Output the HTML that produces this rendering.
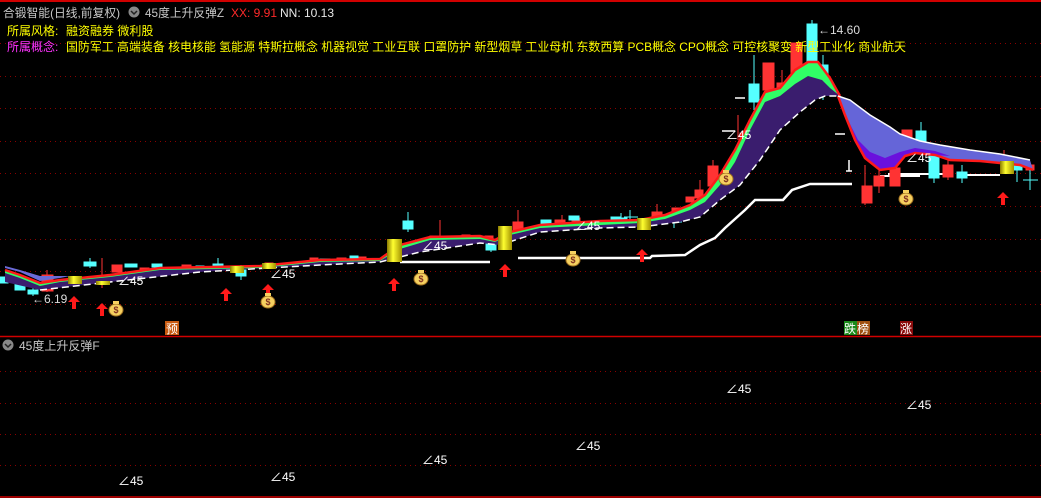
<!DOCTYPE html>
<html><head><meta charset="utf-8"><style>
html,body{margin:0;padding:0;background:#000;width:1041px;height:498px;overflow:hidden}
svg{display:block}
text{font-family:"Liberation Sans","Noto Sans CJK SC",sans-serif}
</style></head><body>
<svg width="1041" height="498" viewBox="0 0 1041 498" xmlns="http://www.w3.org/2000/svg">
<rect width="1041" height="498" fill="#000"/>
<line x1="0" y1="1" x2="1041" y2="1" stroke="#d00000" stroke-width="2"/>
<g stroke="#8a0000" stroke-dasharray="1,4" stroke-width="1">
<line x1="0" y1="43.5" x2="1041" y2="43.5"/><line x1="0" y1="76.5" x2="1041" y2="76.5"/>
<line x1="0" y1="108.5" x2="1041" y2="108.5"/><line x1="0" y1="141.5" x2="1041" y2="141.5"/>
<line x1="0" y1="173.5" x2="1041" y2="173.5"/><line x1="0" y1="206.5" x2="1041" y2="206.5"/>
<line x1="0" y1="239.5" x2="1041" y2="239.5"/><line x1="0" y1="271.5" x2="1041" y2="271.5"/>
<line x1="0" y1="304.5" x2="1041" y2="304.5"/>
<line x1="0" y1="371.5" x2="1041" y2="371.5"/><line x1="0" y1="403.5" x2="1041" y2="403.5"/>
<line x1="0" y1="434.5" x2="1041" y2="434.5"/><line x1="0" y1="465.5" x2="1041" y2="465.5"/>
</g>
<line x1="0" y1="336.5" x2="1041" y2="336.5" stroke="#d00000" stroke-width="1.5"/>
<line x1="0" y1="497" x2="1041" y2="497" stroke="#d00000" stroke-width="1.5"/>

<polyline fill="none" stroke="#fff" stroke-width="2.5" points="400,262 490,262"/>
<polyline fill="none" stroke="#fff" stroke-width="2.5" points="518,258 650,258 652,256 685,255 700,245 715,238 725,228 745,210 755,200 783,200 792,190 810,184 852,184"/>
<polyline fill="none" stroke="#fff" stroke-width="2" points="880,176 920,176"/>
<polyline fill="none" stroke="#fff" stroke-width="2" points="888,174 950,174"/>
<polyline fill="none" stroke="#fff" stroke-width="2" points="960,175 1000,175"/>

<g fill="#ff3333" stroke="#ff3333">
<rect x="42" y="275" width="11" height="16"/><line x1="47" y1="270" x2="47" y2="292"/>
<rect x="112" y="265" width="10" height="7"/><line x1="102" y1="258" x2="102" y2="288"/>
<rect x="140" y="268" width="9" height="3"/><rect x="182" y="265" width="9" height="3"/>
<rect x="265" y="263" width="8" height="4"/><rect x="310" y="258" width="8" height="5"/>
<rect x="337" y="258" width="9" height="3"/><rect x="358" y="257" width="8" height="2"/>
<rect x="430" y="236" width="14" height="6"/><line x1="440" y1="220" x2="440" y2="236"/>
<rect x="462" y="235" width="8" height="3"/><rect x="485" y="236" width="8" height="3"/>
<rect x="513" y="222" width="10" height="8"/><line x1="518" y1="210" x2="518" y2="232"/>
<rect x="555" y="220" width="10" height="4"/><line x1="562" y1="215" x2="562" y2="230"/>
<rect x="572" y="218" width="8" height="3"/>
<rect x="652" y="212" width="10" height="6"/><line x1="657" y1="204" x2="657" y2="220"/>
<rect x="672" y="208" width="8" height="4"/>
<rect x="686" y="197" width="8" height="5"/>
<rect x="695" y="190" width="8" height="8"/><line x1="700" y1="180" x2="700" y2="200"/>
<rect x="708" y="166" width="10" height="20"/><line x1="713" y1="160" x2="713" y2="186"/>
<rect x="740" y="133" width="8" height="12"/><line x1="738" y1="115" x2="738" y2="140"/>
<rect x="763" y="63" width="11" height="27"/>
<rect x="777" y="83" width="8" height="10"/><line x1="782" y1="70" x2="782" y2="100"/>
<rect x="791" y="43" width="11" height="30"/>
<rect x="862" y="186" width="10" height="17"/><line x1="865" y1="165" x2="865" y2="205"/>
<rect x="874" y="176" width="10" height="10"/><line x1="879" y1="170" x2="879" y2="193"/>
<rect x="890" y="168" width="10" height="18"/>
<rect x="902" y="130" width="10" height="14"/>
<rect x="943" y="165" width="10" height="12"/><line x1="948" y1="150" x2="948" y2="180"/>
<rect x="918" y="146" width="10" height="4"/>
<line x1="1004" y1="150" x2="1004" y2="170"/>
<rect x="1026" y="165" width="8" height="5"/>
</g>
<g fill="#55ffff" stroke="#55ffff">
<rect x="0" y="277" width="8" height="6"/><rect x="15" y="283" width="10" height="7"/>
<rect x="28" y="290" width="10" height="4"/><line x1="33" y1="285" x2="33" y2="296"/>
<rect x="84" y="262" width="12" height="4"/><line x1="90" y1="258" x2="90" y2="268"/>
<rect x="125" y="264" width="12" height="3"/>
<rect x="152" y="264" width="10" height="3"/><rect x="196" y="266" width="8" height="3"/>
<rect x="213" y="264" width="10" height="4"/><line x1="218" y1="258" x2="218" y2="270"/>
<rect x="236" y="270" width="10" height="6"/><line x1="241" y1="265" x2="241" y2="280"/>
<rect x="320" y="259" width="10" height="3"/><rect x="350" y="256" width="8" height="4"/>
<rect x="403" y="221" width="10" height="8"/><line x1="408" y1="212" x2="408" y2="232"/>
<rect x="420" y="239" width="8" height="3"/>
<rect x="486" y="242" width="10" height="8"/><line x1="491" y1="240" x2="491" y2="252"/>
<rect x="541" y="220" width="10" height="4"/><rect x="569" y="216" width="10" height="4"/>
<rect x="611" y="217" width="10" height="3"/>
<rect x="617" y="218" width="10" height="7"/>
<line x1="621" y1="213" x2="621" y2="228"/><line x1="630" y1="210" x2="630" y2="222"/><line x1="624" y1="217" x2="638" y2="217"/>
<line x1="674" y1="216" x2="674" y2="228"/><line x1="668" y1="222" x2="682" y2="222"/>
<rect x="749" y="84" width="10" height="18"/><line x1="754" y1="55" x2="754" y2="110"/>
<rect x="807" y="24" width="10" height="50"/><line x1="812" y1="20" x2="812" y2="24"/>
<rect x="819" y="65" width="9" height="20"/><line x1="823" y1="55" x2="823" y2="100"/>
<rect x="916" y="131" width="10" height="15"/><line x1="921" y1="122" x2="921" y2="145"/>
<rect x="929" y="148" width="10" height="30"/><line x1="934" y1="145" x2="934" y2="183"/>
<rect x="957" y="172" width="10" height="6"/><line x1="962" y1="165" x2="962" y2="183"/>
<rect x="1012" y="163" width="10" height="7"/><line x1="1017" y1="162" x2="1017" y2="182"/>
<line x1="1030" y1="168" x2="1030" y2="190"/><line x1="1023" y1="180" x2="1038" y2="180"/>
</g>

<polygon fill="#3a1d6e" points="5,270 20,275 40,283 60,280 110,275 160,268 260,266 320,260 380,259 400,245 430,237 480,236 495,240 510,232 540,225 600,221 640,220 665,215 690,205 705,195 720,175 735,150 750,120 765,92 780,88 795,70 808,62 818,62 830,78 840,96 835,96 825,96 815,100 800,112 780,130 760,160 740,185 720,200 700,217 680,222 640,227 600,228 540,232 500,245 480,243 420,252 380,262 320,265 200,272 110,282 40,290 5,282"/>
<polygon fill="#30ff66" points="5,270 20,275 40,283 60,280 110,275 160,268 260,266 320,260 380,259 400,245 430,237 480,236 495,240 510,232 540,225 600,221 640,220 665,215 690,205 705,195 720,175 735,150 750,120 765,92 780,88 795,70 808,62 818,62 830,78 840,96 830,88 822,80 808,76 795,84 780,96 765,102 750,130 735,162 720,185 705,202 690,210 665,219 640,223 600,225 540,228 510,235 495,242 480,239 430,240 400,249 380,261 320,262 260,268 160,270 110,277 60,282 40,286 20,278 5,273"/>
<polyline fill="none" stroke="#ff1a1a" stroke-width="2.5" points="5,270 20,275 40,283 60,280 110,275 160,268 260,266 320,260 380,259 400,245 430,237 480,236 495,240 510,232 540,225 600,221 640,220 665,215 690,205 705,195 720,175 735,150 750,120 765,92 780,88 795,70 808,62 818,62 830,78 840,96"/>
<polygon fill="#6b6bd8" points="5,268 20,272 40,281 60,278 70,276 60,276 40,276 20,270 5,266"/>
<polyline fill="none" stroke="#fff" stroke-width="1.5" stroke-dasharray="7,4" points="40,290 110,282 200,272 320,265 380,262 420,252 480,243 500,245 540,232 600,228 640,227 680,222 700,217 720,200 740,185 760,160 780,130 800,112 815,100 825,96 838,96"/>

<polygon fill="#6565d8" points="838,96 850,100 870,115 890,127 900,134 920,141 940,145 970,150 1000,154 1030,160 1033,170 1020,165 1000,163 980,161 950,160 935,155 915,153 905,156 895,168 880,170 865,158 855,140 845,115"/>
<polygon fill="#6a10dd" points="838,96 848,120 858,140 870,152 885,158 900,152 915,148 935,151 950,156 935,155 915,153 905,156 895,168 880,170 865,158 855,140 845,115"/>
<polyline fill="none" stroke="#ff1a1a" stroke-width="2.5" points="838,96 845,115 855,140 865,158 880,170 895,168 905,156 915,153 935,155 950,160 980,161 1000,163 1020,165 1033,170"/>
<polyline fill="none" stroke="#fff" stroke-width="1.5" points="838,96 850,100 870,115 890,127 900,134 920,141 940,145 970,150 1000,154 1030,160"/>

<defs><linearGradient id="gd" x1="0" x2="1"><stop offset="0" stop-color="#8a7a00"/><stop offset="0.4" stop-color="#ffff30"/><stop offset="1" stop-color="#a09000"/></linearGradient></defs>
<g fill="url(#gd)">
<rect x="68" y="276" width="14" height="8"/><rect x="96" y="281" width="14" height="4"/>
<rect x="230" y="266" width="14" height="7"/><rect x="262" y="263" width="14" height="6"/>
<rect x="387" y="239" width="15" height="23"/><rect x="498" y="226" width="14" height="24"/>
<rect x="637" y="218" width="14" height="12"/><rect x="1000" y="161" width="14" height="13"/>
</g>

<g fill="#ff1a1a">
<path d="M0,0 l-6,6 h4 v7 h4 v-7 h4 z" transform="translate(74,296)"/>
<path d="M0,0 l-6,6 h4 v7 h4 v-7 h4 z" transform="translate(102,303)"/>
<path d="M0,0 l-6,6 h4 v7 h4 v-7 h4 z" transform="translate(226,288)"/>
<path d="M0,0 l-6,6 h4 v7 h4 v-7 h4 z" transform="translate(268,284)"/>
<path d="M0,0 l-6,6 h4 v7 h4 v-7 h4 z" transform="translate(394,278)"/>
<path d="M0,0 l-6,6 h4 v7 h4 v-7 h4 z" transform="translate(505,264)"/>
<path d="M0,0 l-6,6 h4 v7 h4 v-7 h4 z" transform="translate(642,249)"/>
<path d="M0,0 l-6,6 h4 v7 h4 v-7 h4 z" transform="translate(1003,192)"/>
</g>
<g font-size="9" font-weight="bold" text-anchor="middle">
<g transform="translate(116,310)"><ellipse cx="0" cy="0" rx="7" ry="6" fill="#f5d060" stroke="#a07020"/><rect x="-3" y="-9" width="6" height="3" fill="#f5d060"/><text x="0" y="3" fill="#803020">$</text></g>
<g transform="translate(268,302)"><ellipse cx="0" cy="0" rx="7" ry="6" fill="#f5d060" stroke="#a07020"/><rect x="-3" y="-9" width="6" height="3" fill="#f5d060"/><text x="0" y="3" fill="#803020">$</text></g>
<g transform="translate(421,279)"><ellipse cx="0" cy="0" rx="7" ry="6" fill="#f5d060" stroke="#a07020"/><rect x="-3" y="-9" width="6" height="3" fill="#f5d060"/><text x="0" y="3" fill="#803020">$</text></g>
<g transform="translate(573,260)"><ellipse cx="0" cy="0" rx="7" ry="6" fill="#f5d060" stroke="#a07020"/><rect x="-3" y="-9" width="6" height="3" fill="#f5d060"/><text x="0" y="3" fill="#803020">$</text></g>
<g transform="translate(726,179)"><ellipse cx="0" cy="0" rx="7" ry="6" fill="#f5d060" stroke="#a07020"/><rect x="-3" y="-9" width="6" height="3" fill="#f5d060"/><text x="0" y="3" fill="#803020">$</text></g>
<g transform="translate(906,199)"><ellipse cx="0" cy="0" rx="7" ry="6" fill="#f5d060" stroke="#a07020"/><rect x="-3" y="-9" width="6" height="3" fill="#f5d060"/><text x="0" y="3" fill="#803020">$</text></g>
</g>

<g fill="#fff" font-size="12">
<text x="118" y="285">∠45</text><text x="270" y="278">∠45</text>
<text x="422" y="250">∠45</text><text x="575" y="230">∠45</text>
<text x="726" y="139">∠45</text><text x="906" y="162">∠45</text>
<text x="818" y="34" fill="#ddd">←14.60</text>
<text x="32" y="303" fill="#ddd">←6.19</text>
<text x="118" y="485">∠45</text><text x="270" y="481">∠45</text>
<text x="422" y="464">∠45</text><text x="575" y="450">∠45</text>
<text x="726" y="393">∠45</text><text x="906" y="409">∠45</text>
</g>
<g stroke="#fff" stroke-width="1.5"><line x1="735" y1="131" x2="722" y2="131"/><line x1="835" y1="134" x2="845" y2="134"/><line x1="735" y1="98" x2="745" y2="98"/><line x1="846" y1="171" x2="852" y2="171"/><line x1="849" y1="160" x2="849" y2="171"/></g>

<rect x="165" y="321" width="14" height="14" fill="#c85a10"/><text x="166" y="333" font-size="12" fill="#fff">预</text>
<rect x="844" y="321" width="13" height="14" fill="#1a8a1a"/><text x="844" y="333" font-size="12" fill="#fff">跌</text>
<rect x="857" y="321" width="13" height="14" fill="#a05010"/><text x="857" y="333" font-size="12" fill="#fff">榜</text>
<rect x="900" y="321" width="13" height="14" fill="#8a0a0a"/><text x="900" y="333" font-size="12" fill="#fff">涨</text>

<g font-size="12">
<text x="3" y="17" fill="#c8c8c8" textLength="117" lengthAdjust="spacingAndGlyphs">合锻智能(日线,前复权)</text>
<circle cx="134" cy="12" r="5.5" fill="#888"/><path d="M131,11 l3,3 l3,-3" stroke="#222" stroke-width="1.5" fill="none"/>
<text x="145" y="17" fill="#c8c8c8" textLength="79" lengthAdjust="spacingAndGlyphs">45度上升反弹Z</text>
<text x="231" y="17" fill="#ff2a2a">XX: 9.91</text>
<text x="280" y="17" fill="#e8e8e8">NN: 10.13</text>
<text x="7" y="35" fill="#ffff00">所属风格:</text>
<text x="66" y="35" fill="#ffff00">融资融券 微利股</text>
<text x="7" y="51" fill="#ff33ff">所属概念:</text>
<text x="66" y="51" fill="#ffff00" textLength="840" lengthAdjust="spacingAndGlyphs">国防军工 高端装备 核电核能 氢能源 特斯拉概念 机器视觉 工业互联 口罩防护 新型烟草 工业母机 东数西算 PCB概念 CPO概念 可控核聚变 新型工业化 商业航天</text>
<circle cx="8" cy="345" r="5.5" fill="#888"/><path d="M5,344 l3,3 l3,-3" stroke="#222" stroke-width="1.5" fill="none"/>
<text x="19" y="350" fill="#c8c8c8">45度上升反弹F</text>
</g>
</svg>
</body></html>
